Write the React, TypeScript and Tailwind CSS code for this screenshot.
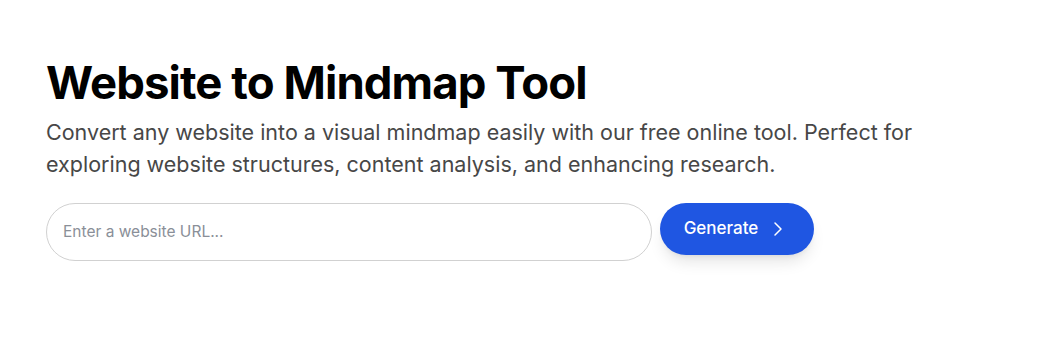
import { ChevronRight } from "lucide-react";

export default function App() {
  return (
    <div className="min-h-screen bg-white font-['Inter',sans-serif]">
      <section className="px-[46px] pt-[60px]">
        <h1 className="text-[45.5px] font-bold leading-none tracking-[-0.02em] text-black">
          Website to Mindmap Tool
        </h1>
        <p className="mt-[10px] max-w-[880px] text-[21.5px] leading-8 text-[#474747]">
          Convert any website into a visual mindmap easily with our free online
          tool. Perfect for exploring website structures, content analysis, and
          enhancing research.
        </p>
        <div className="mt-[23px] flex items-start gap-2">
          <input
            type="text"
            placeholder="Enter a website URL..."
            className="h-[58px] w-[606px] rounded-full border border-[#d1d1d1] px-4 text-[15.5px] text-gray-900 outline-none placeholder:text-[#8a8f98]"
          />
          <button className="flex h-[52px] w-[154px] items-center justify-center gap-2 rounded-full bg-[#1f56e2] text-[17px] font-medium text-white shadow-lg">
            Generate
            <ChevronRight className="h-6 w-6" strokeWidth={1.5} />
          </button>
        </div>
      </section>
    </div>
  );
}
